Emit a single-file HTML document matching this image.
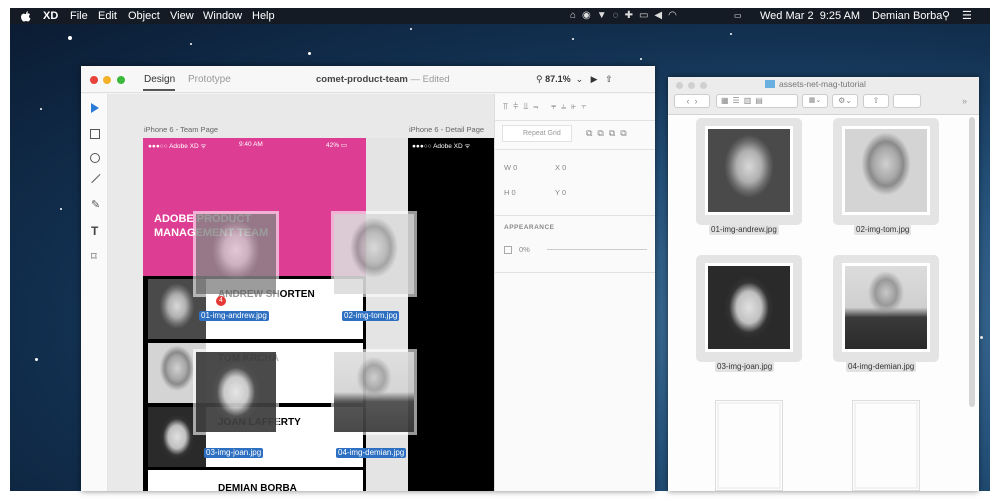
<!DOCTYPE html>
<html><head><meta charset="utf-8"><style>
*{margin:0;padding:0;box-sizing:border-box}
body{width:1000px;height:500px;background:#fff;position:relative;overflow:hidden;font-family:"Liberation Sans",sans-serif}
.a{position:absolute}
#scr{left:10px;top:8px;width:980px;height:483px;background:radial-gradient(ellipse at 80% 65%,#3f7098 0%,#245078 35%,#123050 65%,#0a1a30 100%);overflow:hidden}
.star{position:absolute;background:#fff;border-radius:50%}
#menu{left:0;top:0;width:980px;height:16px;background:#151b24;color:#fff;font-size:11px;line-height:16px}
.photo{position:absolute;background:radial-gradient(ellipse 30% 38% at 50% 45%,#d8d8d8 0%,#b0b0b0 50%,#6a6a6a 80%,#4a4a4a 100%)}
.photo.l{background:radial-gradient(ellipse 30% 38% at 50% 42%,#d0d0d0 0%,#a8a8a8 50%,#8a8a8a 70%,#d4d4d4 100%)}
.photo.d{background:radial-gradient(ellipse 22% 26% at 50% 32%,#c8c8c8 0%,#999 60%,transparent 100%),linear-gradient(#dcdcdc 0%,#d0d0d0 50%,#3a3a3a 62%,#2a2a2a 100%)}
.photo.j{background:radial-gradient(ellipse 30% 38% at 50% 50%,#e0e0e0 0%,#c0c0c0 50%,#333 80%,#2a2a2a 100%)}
.tag{position:absolute;background:#2d6fc0;color:#fff;font-size:8px;line-height:10px;padding:0 2px;border-radius:2px}
.ft{position:absolute;background:#e4e4e4;border-radius:5px}
.fl{position:absolute;font-size:8px;color:#333;background:#e2e2e2;padding:0 2px;border-radius:2px;line-height:10px}
.tool{position:absolute;left:9px;width:10px;height:10px;border:1.3px solid #555}
</style></head><body>
<div id="scr" class="a">
 <div class="star" style="left:58px;top:28px;width:4px;height:4px"></div>
 <div class="star" style="left:298px;top:44px;width:3px;height:3px"></div>
 <div class="star" style="left:562px;top:30px;width:2px;height:2px"></div>
 <div class="star" style="left:720px;top:25px;width:2px;height:2px"></div>
 <div class="star" style="left:30px;top:100px;width:2px;height:2px"></div>
 <div class="star" style="left:25px;top:350px;width:3px;height:3px"></div>
 <div class="star" style="left:50px;top:200px;width:2px;height:2px"></div>
 <div class="star" style="left:400px;top:20px;width:2px;height:2px"></div>
 <div class="star" style="left:970px;top:328px;width:3px;height:3px"></div>
 <div class="star" style="left:630px;top:50px;width:2px;height:2px"></div>
 <div class="star" style="left:180px;top:35px;width:2px;height:2px"></div>
 <div id="menu" class="a">
  <svg class="a" style="left:11px;top:3px" width="10" height="11" viewBox="0 0 10 11"><path d="M5 3C6 2 8 2 9 3.5 7.5 4.5 7.8 7 9.5 7.5 9 9 8 10.5 7 10.5 6 10.5 6 10 5 10S4 10.5 3 10.5C1.5 10.5 0 8 0 6 0 3.5 2 2.5 3.2 2.7 4 2.8 4.5 3.2 5 3ZM5 2.5C5 1.3 6 .3 7 .2 7.1 1.4 6 2.5 5 2.5Z" fill="#fff"/></svg>
  <b class="a" style="left:33px">XD</b>
  <span class="a" style="left:60px">File</span><span class="a" style="left:88px">Edit</span><span class="a" style="left:118px">Object</span><span class="a" style="left:160px">View</span><span class="a" style="left:193px">Window</span><span class="a" style="left:242px">Help</span>
  <span class="a" style="left:560px;font-size:10px;letter-spacing:6px;color:#ddd">⌂◉▼◌✚▭◀◠</span>
  <span class="a" style="left:724px;font-size:8px;top:0">▭</span>
  <span class="a" style="left:750px">Wed Mar 2&nbsp; 9:25 AM</span>
  <span class="a" style="left:862px">Demian Borba</span>
  <span class="a" style="left:932px">⚲</span><span class="a" style="left:952px">☰</span>
 </div>
</div>

<div class="a" style="left:81px;top:66px;width:574px;height:425px;background:#f4f4f4;box-shadow:0 0 6px rgba(0,0,0,.5)">
 <div class="a" style="left:0;top:0;width:574px;height:27px;background:#f7f7f7;border-bottom:1px solid #e0e0e0"></div>
 <div class="a" style="left:9px;top:10px;width:8px;height:8px;border-radius:50%;background:#e8423c"></div>
 <div class="a" style="left:22px;top:10px;width:8px;height:8px;border-radius:50%;background:#f3b228"></div>
 <div class="a" style="left:36px;top:10px;width:8px;height:8px;border-radius:50%;background:#3bb93c"></div>
 <div class="a" style="left:63px;top:8px;font-size:10px;color:#333">Design</div>
 <div class="a" style="left:62px;top:23px;width:32px;height:2px;background:#555"></div>
 <div class="a" style="left:107px;top:8px;font-size:10px;color:#999">Prototype</div>
 <div class="a" style="left:235px;top:8px;font-size:9.5px;color:#444"><b>comet-product-team</b> <span style="color:#999">— Edited</span></div>
 <div class="a" style="left:455px;top:8px;font-size:9px;color:#333">⚲ <b>87.1%</b> &nbsp;⌄ &nbsp;&nbsp;▶ &nbsp;&nbsp;⇧</div>
 <div class="a" style="left:0;top:28px;width:27px;height:397px;background:#fafafa;border-right:1px solid #e4e4e4"></div>
 <div class="a" style="left:10px;top:37px;width:0;height:0;border-left:8px solid #2a7bd5;border-top:5px solid transparent;border-bottom:5px solid transparent"></div>
 <div class="tool" style="top:63px"></div>
 <div class="tool" style="top:87px;border-radius:50%"></div>
 <div class="a" style="left:9px;top:112px;width:12px;height:1.3px;background:#555;transform:rotate(-45deg)"></div>
 <div class="a" style="left:10px;top:132px;font-size:11px;color:#555">✎</div>
 <div class="a" style="left:10px;top:158px;font-size:12px;color:#444;font-weight:bold">T</div>
 <div class="a" style="left:10px;top:184px;font-size:11px;color:#555">⌑</div>
 <div class="a" style="left:27px;top:28px;width:386px;height:397px;background:#e9e9e9"></div>
 <div class="a" style="left:63px;top:59px;font-size:7.5px;color:#666">iPhone 6 - Team Page</div>
 <div class="a" style="left:328px;top:59px;font-size:7.5px;color:#666">iPhone 6 - Detail Page</div>
 <div class="a" style="left:62px;top:72px;width:223px;height:353px;background:#000"></div>
 <div class="a" style="left:62px;top:72px;width:223px;height:138px;background:#de3d94"></div>
 <div class="a" style="left:67px;top:75px;font-size:6.5px;color:#fff">●●●○○ Adobe XD ᯤ</div>
 <div class="a" style="left:158px;top:75px;font-size:6.5px;color:#fff">9:40 AM</div>
 <div class="a" style="left:245px;top:75px;font-size:6.5px;color:#fff">42% ▭</div>
 <div class="a" style="left:73px;top:146px;font-size:11px;color:#fff;font-weight:bold;line-height:14px">ADOBE PRODUCT<br>MANAGEMENT TEAM</div>
 <div class="a" style="left:67px;top:213px;width:215px;height:60px;background:#fff"></div>
 <div class="photo" style="left:67px;top:213px;width:58px;height:60px"></div>
 <div class="a" style="left:67px;top:277px;width:215px;height:60px;background:#fff"></div>
 <div class="photo l" style="left:67px;top:277px;width:58px;height:60px"></div>
 <div class="a" style="left:67px;top:341px;width:215px;height:60px;background:#fff"></div>
 <div class="photo j" style="left:67px;top:341px;width:58px;height:60px"></div>
 <div class="a" style="left:67px;top:404px;width:215px;height:21px;background:#fff"></div>
 <div class="a" style="left:137px;top:223px;font-size:10px;font-weight:bold">ANDREW SHORTEN</div>
 <div class="a" style="left:137px;top:287px;font-size:10px;font-weight:bold;color:#555">TOM KRCHA</div>
 <div class="a" style="left:137px;top:351px;font-size:10px;font-weight:bold">JOAN LAFFERTY</div>
 <div class="a" style="left:137px;top:417px;font-size:10px;font-weight:bold">DEMIAN BORBA</div>
 <div class="a" style="left:285px;top:72px;width:42px;height:353px;background:#e4e4e4"></div>
 <div class="a" style="left:327px;top:72px;width:86px;height:353px;background:#000"></div>
 <div class="a" style="left:331px;top:75px;font-size:6.5px;color:#fff">●●●○○ Adobe XD ᯤ</div>
 <div class="a" style="left:112px;top:145px;width:86px;height:86px;background:rgba(255,255,255,.6)"></div>
 <div class="photo" style="left:115px;top:148px;width:80px;height:80px;opacity:.55"></div>
 <div class="a" style="left:250px;top:145px;width:86px;height:86px;background:rgba(255,255,255,.6)"></div>
 <div class="photo l" style="left:253px;top:148px;width:80px;height:80px;opacity:.75"></div>
 <div class="a" style="left:112px;top:283px;width:86px;height:86px;background:rgba(255,255,255,.6)"></div>
 <div class="photo j" style="left:115px;top:286px;width:80px;height:80px;opacity:.85"></div>
 <div class="a" style="left:250px;top:283px;width:86px;height:86px;background:rgba(255,255,255,.6)"></div>
 <div class="photo d" style="left:253px;top:286px;width:80px;height:80px;opacity:.85"></div>
 <div class="a" style="left:135px;top:230px;width:10px;height:10px;border-radius:50%;background:#e53935;color:#fff;font-size:7px;text-align:center;line-height:10px">4</div>
 <div class="tag" style="left:118px;top:245px">01-img-andrew.jpg</div>
 <div class="tag" style="left:261px;top:245px">02-img-tom.jpg</div>
 <div class="tag" style="left:123px;top:382px">03-img-joan.jpg</div>
 <div class="tag" style="left:255px;top:382px">04-img-demian.jpg</div>
 <div class="a" style="left:413px;top:28px;width:161px;height:397px;background:#fafafa;border-left:1px solid #ddd"></div>
 <div class="a" style="left:422px;top:35px;font-size:9px;color:#888;letter-spacing:5px">⫪⫩⫫⫬ ⫧⫨⫦⫟</div>
 <div class="a" style="left:413px;top:54px;width:161px;height:1px;background:#e2e2e2"></div>
 <div class="a" style="left:421px;top:59px;width:70px;height:17px;border:1px solid #e2e2e2;background:#fff;font-size:7px;color:#999;line-height:15px;padding-left:20px">Repeat Grid</div>
 <div class="a" style="left:505px;top:62px;font-size:9px;color:#888;letter-spacing:5px">⧉⧉⧉⧉</div>
 <div class="a" style="left:413px;top:83px;width:161px;height:1px;background:#e2e2e2"></div>
 <div class="a" style="left:423px;top:97px;font-size:7.5px;color:#888">W 0</div>
 <div class="a" style="left:474px;top:97px;font-size:7.5px;color:#888">X 0</div>
 <div class="a" style="left:423px;top:122px;font-size:7.5px;color:#888">H 0</div>
 <div class="a" style="left:474px;top:122px;font-size:7.5px;color:#888">Y 0</div>
 <div class="a" style="left:413px;top:149px;width:161px;height:1px;background:#e2e2e2"></div>
 <div class="a" style="left:423px;top:158px;font-size:6.5px;color:#888;letter-spacing:.5px;font-weight:bold">APPEARANCE</div>
 <div class="a" style="left:423px;top:180px;width:8px;height:8px;border:1px solid #aaa"></div>
 <div class="a" style="left:438px;top:179px;font-size:7.5px;color:#888">0%</div>
 <div class="a" style="left:466px;top:183px;width:100px;height:1px;background:#ccc"></div>
 <div class="a" style="left:413px;top:206px;width:161px;height:1px;background:#e2e2e2"></div>
</div>

<div class="a" style="left:668px;top:77px;width:311px;height:414px;background:#fdfdfd;box-shadow:0 0 6px rgba(0,0,0,.5)">
 <div class="a" style="left:0;top:0;width:311px;height:38px;background:#ececec;border-bottom:1px solid #d4d4d4"></div>
 <div class="a" style="left:8px;top:5px;width:7px;height:7px;border-radius:50%;background:#d0d0d0"></div>
 <div class="a" style="left:20px;top:5px;width:7px;height:7px;border-radius:50%;background:#d0d0d0"></div>
 <div class="a" style="left:32px;top:5px;width:7px;height:7px;border-radius:50%;background:#d0d0d0"></div>
 <div class="a" style="left:97px;top:3px;width:10px;height:8px;background:#6ab0e0"></div>
 <div class="a" style="left:111px;top:2px;font-size:8.5px;color:#777">assets-net-mag-tutorial</div>
 <div class="a" style="left:6px;top:17px;width:36px;height:14px;background:#fff;border:1px solid #ccc;border-radius:3px;font-size:9px;color:#888;text-align:center;line-height:12px">‹ &nbsp;›</div>
 <div class="a" style="left:48px;top:17px;width:82px;height:14px;background:#fff;border:1px solid #ccc;border-radius:3px;font-size:8px;color:#888;line-height:12px;padding-left:4px;letter-spacing:4px">▦☰▥▤</div>
 <div class="a" style="left:134px;top:17px;width:26px;height:14px;background:#fff;border:1px solid #ccc;border-radius:3px;font-size:7px;color:#888;line-height:12px;text-align:center">▦⌄</div>
 <div class="a" style="left:164px;top:17px;width:26px;height:14px;background:#fff;border:1px solid #ccc;border-radius:3px;font-size:8px;color:#888;line-height:12px;text-align:center">⚙⌄</div>
 <div class="a" style="left:195px;top:17px;width:26px;height:14px;background:#fff;border:1px solid #ccc;border-radius:3px;font-size:8px;color:#888;line-height:12px;text-align:center">⇧</div>
 <div class="a" style="left:225px;top:17px;width:28px;height:14px;background:#fff;border:1px solid #ccc;border-radius:3px"></div>
 <div class="a" style="left:294px;top:19px;font-size:9px;color:#999">»</div>
 <div class="a" style="left:301px;top:40px;width:6px;height:290px;background:#d6d6d6;border-radius:3px"></div>
 <div class="ft" style="left:28px;top:41px;width:106px;height:107px"></div>
 <div class="a" style="left:37px;top:49px;width:88px;height:89px;background:#fff"></div>
 <div class="photo" style="left:40px;top:52px;width:82px;height:83px"></div>
 <div class="fl" style="left:41px;top:148px">01-img-andrew.jpg</div>
 <div class="ft" style="left:165px;top:41px;width:106px;height:107px"></div>
 <div class="a" style="left:174px;top:49px;width:88px;height:89px;background:#fff"></div>
 <div class="photo l" style="left:177px;top:52px;width:82px;height:83px"></div>
 <div class="fl" style="left:186px;top:148px">02-img-tom.jpg</div>
 <div class="ft" style="left:28px;top:178px;width:106px;height:107px"></div>
 <div class="a" style="left:37px;top:186px;width:88px;height:89px;background:#fff"></div>
 <div class="photo j" style="left:40px;top:189px;width:82px;height:83px"></div>
 <div class="fl" style="left:47px;top:285px">03-img-joan.jpg</div>
 <div class="ft" style="left:165px;top:178px;width:106px;height:107px"></div>
 <div class="a" style="left:174px;top:186px;width:88px;height:89px;background:#fff"></div>
 <div class="photo d" style="left:177px;top:189px;width:82px;height:83px"></div>
 <div class="fl" style="left:178px;top:285px">04-img-demian.jpg</div>
 <div class="a" style="left:47px;top:323px;width:68px;height:91px;border:1px solid #ddd;outline:2px solid #f2f2f2;outline-offset:-4px"></div>
 <div class="a" style="left:184px;top:323px;width:68px;height:91px;border:1px solid #ddd;outline:2px solid #f2f2f2;outline-offset:-4px"></div>
</div>
</body></html>
